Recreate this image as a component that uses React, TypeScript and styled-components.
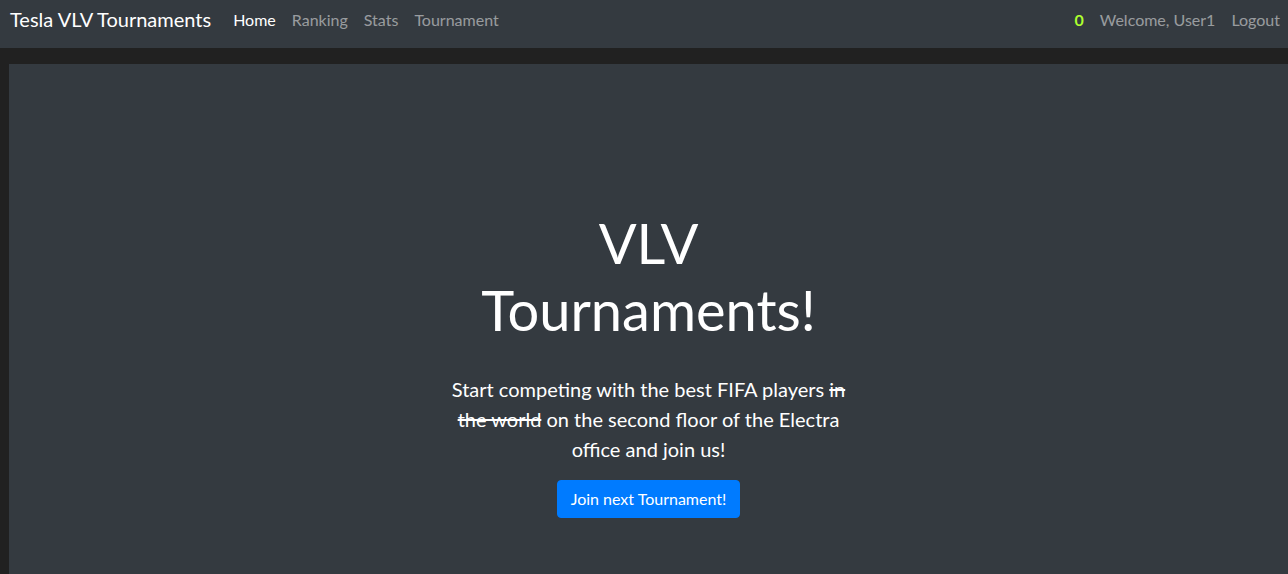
import React from "react";
import styled, { createGlobalStyle } from "styled-components";

const Global = createGlobalStyle`
  html, body { margin: 0; padding: 0; }
  body {
    background: #212121;
    font-family: "Segoe UI", "Lato", "Liberation Sans", sans-serif;
    color: #fff;
    overflow: hidden;
  }
  * { box-sizing: border-box; }
`;

const Navbar = styled.nav`
  height: 48px;
  background: #343a40;
  display: flex;
  align-items: center;
  padding: 0 0 10px 10px;
`;

const Brand = styled.a`
  font-size: 20px;
  color: #fff;
  margin-right: 14px;
  white-space: nowrap;
  text-decoration: none;
`;

const NavList = styled.div`
  display: flex;
  align-items: center;
`;

const NavLink = styled.a<{ $active?: boolean }>`
  font-size: 16px;
  padding: 8px;
  color: ${(p) => (p.$active ? "#fff" : "rgba(255,255,255,0.5)")};
  text-decoration: none;
  white-space: nowrap;
`;

const Spacer = styled.div`
  flex: 1;
`;

const Points = styled.span`
  color: #adff2f;
  font-weight: 700;
  font-size: 16px;
  margin-right: 8px;
`;

const Main = styled.main`
  padding: 16px 0 0 9px;
`;

const Jumbotron = styled.section`
  background: #343a40;
  min-height: 510px;
  display: flex;
  flex-direction: column;
  align-items: center;
  padding-top: 145px;
  text-align: center;
`;

const Column = styled.div`
  width: 420px;
  display: flex;
  flex-direction: column;
  align-items: center;
`;

const Title = styled.h1`
  font-size: 56px;
  font-weight: 400;
  line-height: 1.2;
  margin: 0 0 31px;
  width: 360px;
`;

const Lead = styled.p`
  font-size: 20px;
  font-weight: 400;
  line-height: 30px;
  margin: 0 0 16px;
`;

const Button = styled.button`
  background: #007bff;
  color: #fff;
  border: 1px solid #007bff;
  border-radius: 4px;
  font-family: inherit;
  font-size: 16px;
  line-height: 24px;
  padding: 6px 13px;
  cursor: pointer;
`;

export default function App() {
  return (
    <>
      <Global />
      <Navbar>
        <Brand href="#">Tesla VLV Tournaments</Brand>
        <NavList>
          <NavLink $active href="#">Home</NavLink>
          <NavLink href="#">Ranking</NavLink>
          <NavLink href="#">Stats</NavLink>
          <NavLink href="#">Tournament</NavLink>
        </NavList>
        <Spacer />
        <NavList>
          <Points>0</Points>
          <NavLink href="#">Welcome, User1</NavLink>
          <NavLink href="#">Logout</NavLink>
        </NavList>
      </Navbar>
      <Main>
        <Jumbotron>
          <Column>
            <Title>VLV Tournaments!</Title>
            <Lead>
              Start competing with the best FIFA players <s>in the world</s> on
              the second floor of the Electra office and join us!
            </Lead>
            <Button>Join next Tournament!</Button>
          </Column>
        </Jumbotron>
      </Main>
    </>
  );
}
